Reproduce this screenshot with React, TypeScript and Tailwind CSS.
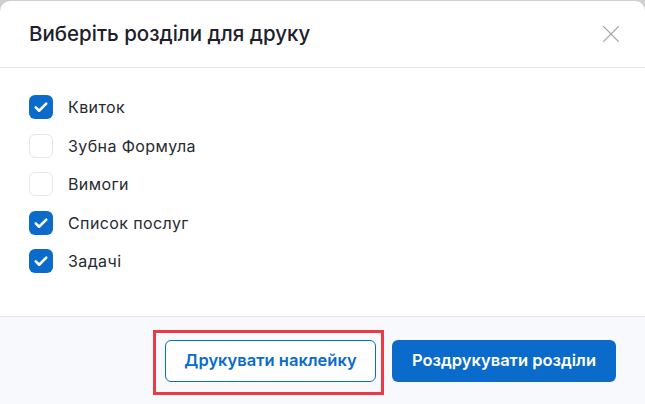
import { useState } from "react";

const sections = [
  { label: "Квиток", checked: true },
  { label: "Зубна Формула", checked: false },
  { label: "Вимоги", checked: false },
  { label: "Список послуг", checked: true },
  { label: "Задачі", checked: true },
];

function Check({ on }: { on: boolean }) {
  return (
    <span
      className={
        on
          ? "w-6 h-6 rounded-[6px] bg-[#0b6bcb] flex items-center justify-center"
          : "w-6 h-6 rounded-[6px] border border-[#e3e6ea] bg-white"
      }
    >
      {on && (
        <svg viewBox="0 0 24 24" className="w-[18px] h-[18px]" fill="none">
          <path d="M5 12.5l4.5 4.5L19 7.5" stroke="white" strokeWidth="3.4" strokeLinecap="round" strokeLinejoin="round" />
        </svg>
      )}
    </span>
  );
}

export default function App() {
  const [items, setItems] = useState(sections);

  return (
    <div className="w-[645px] h-[404px] bg-[#cfcfcf] pt-px overflow-hidden" style={{ fontFamily: "Inter, 'Noto Sans', sans-serif" }}>
      <div className="h-full bg-white rounded-t-[10px] flex flex-col">
        {/* Header */}
        <div className="h-[67px] flex items-center justify-between pl-[29px] pr-[22px] border-b border-[#e4e6e9] shrink-0">
          <h2 className="text-[20.5px] font-medium text-[#1d2129] tracking-[0px]">Виберіть розділи для друку</h2>
          <button className="w-6 h-6 flex items-center justify-center text-[#a3a3a3]">
            <svg viewBox="0 0 24 24" className="w-[22px] h-[22px]" fill="none" stroke="currentColor" strokeWidth="1.4" strokeLinecap="round">
              <path d="M4 4l16 16M20 4L4 20" />
            </svg>
          </button>
        </div>

        {/* Body */}
        <div className="flex-1 flex flex-col gap-[14.5px] pl-[29px] pt-[27px]">
          {items.map((item, i) => (
            <label
              key={item.label}
              className="flex items-center gap-[15px] h-6 cursor-pointer"
              onClick={() => setItems(items.map((it, j) => (j === i ? { ...it, checked: !it.checked } : it)))}
            >
              <Check on={item.checked} />
              <span className="text-[16px] text-[#272a30] tracking-[0.4px]">{item.label}</span>
            </label>
          ))}
        </div>

        {/* Footer */}
        <div className="h-[88px] shrink-0 bg-[#f7f9fc] border-t border-[#e4e6e9] flex items-center justify-end gap-4 pr-[29px]">
          <div className="relative">
            <button className="w-[211px] h-[42px] rounded-[6px] border border-[#0b6bcb] bg-white text-[#0b6bcb] text-[16.5px] font-semibold">
              Друкувати наклейку
            </button>
            <div className="absolute -left-[12px] -right-[8px] -top-[10px] -bottom-[13px] border-[3.5px] border-[#ea3a45] pointer-events-none" />
          </div>
          <button className="w-[224px] h-[42px] rounded-[6px] bg-[#0b6bcb] text-white text-[16.5px] font-semibold">
            Роздрукувати розділи
          </button>
        </div>
      </div>
    </div>
  );
}
